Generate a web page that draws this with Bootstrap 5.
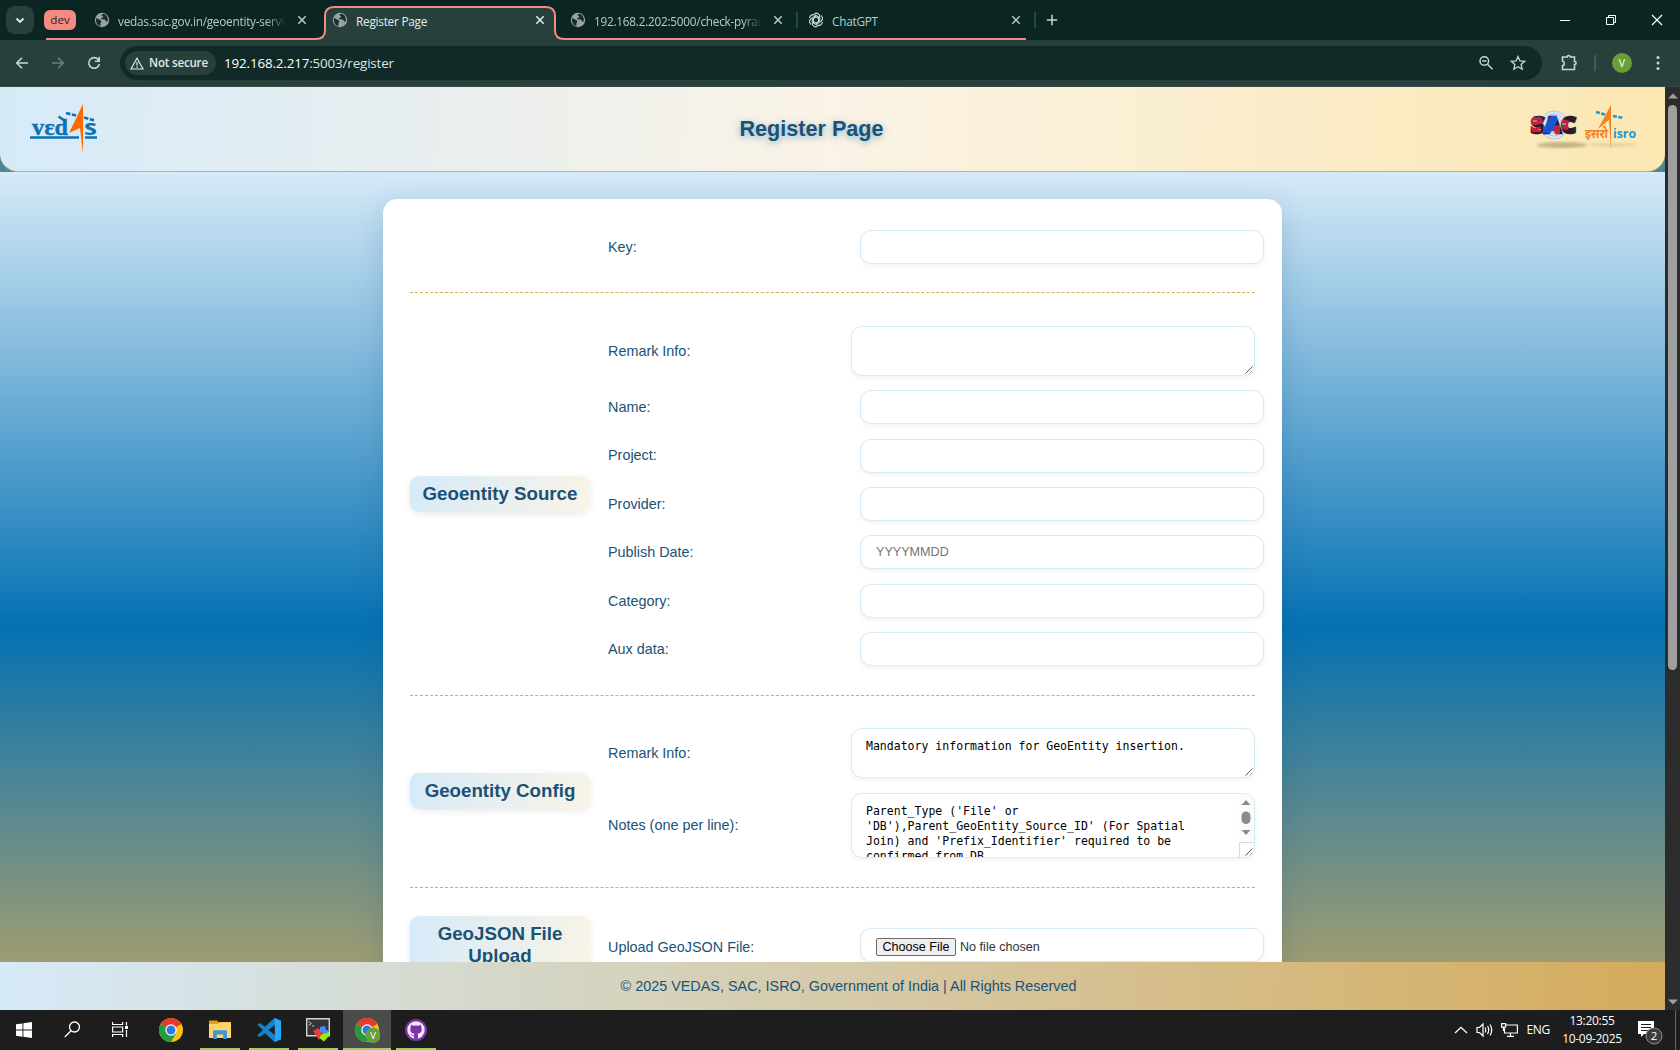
<!DOCTYPE html>
<html lang="en">
<head>
<meta charset="utf-8">
<title>Register Page</title>
<link href="https://cdn.jsdelivr.net/npm/bootstrap@5.3.0/dist/css/bootstrap.min.css" rel="stylesheet">
<style>
  html, body { width: 1680px; height: 1050px; overflow: hidden; }
  body { font-family: "Liberation Sans", Arial, sans-serif; font-size: 14.4px; line-height: 1.15; background: #1d1d1d; }
  svg { display: block; flex: none; }
  .ui-font { font-family: "Open Sans", "Noto Sans", sans-serif; }

  /* browser chrome */
  .tabstrip { height: 40px; background: #0b2622; color: #b5cdc6; font-size: 11.8px; letter-spacing: -.25px; }
  .tab-outline { position: absolute; left: 0; top: 0; }
  .tab-menu { width: 28px; height: 28px; margin-left: 6px; background: #28403b; border-radius: 9px; }
  .group-chip { width: 32px; height: 20px; margin-left: 10px; background: #f38b80; color: #33211f; border-radius: 6px; font-size: 11.6px; letter-spacing: 0; line-height: 18px; padding-bottom: 1px; }
  .tab-list { margin-left: 14px; }
  .browser-tab { width: 238px; padding-left: 4px; }
  .tab-title { width: 168px; margin: 0 8px; padding-top: 1px; line-height: 20px; white-space: nowrap; overflow: hidden; }
  .fade-end { -webkit-mask-image: linear-gradient(90deg, #000 88%, transparent 100%); mask-image: linear-gradient(90deg, #000 88%, transparent 100%); }
  .browser-tab.current { color: #e4eeea; }
  .win-controls { color: #fff; gap: 30px; padding-right: 15px; }
  .toolbar { height: 47px; background: #28403b; border-bottom: 1px solid #3b4946; color: #c3d8d1; padding: 0 14px; }
  .nav-icons { gap: 20px; width: 106px; }
  .omnibox { width: 1422px; height: 34px; background: #112a27; border-radius: 17px; padding: 0 16px 0 5px; }
  .secure-chip { width: 91px; height: 24px; border-radius: 12px; background: #28403b; color: #e0ebe7; font-size: 11.6px; font-weight: 600; letter-spacing: -.2px; padding-left: 5px; gap: 5px; white-space: nowrap; line-height: 20px; }
  .url { color: #dbe6e2; font-size: 13.4px; margin-left: 8px; letter-spacing: -.15px; line-height: 20px; padding-bottom: 1px; }
  .url b { color: #fff; font-weight: 400; }
  .avatar { width: 20px; height: 20px; background: #689f38; color: #fff; font-size: 10.5px; margin-left: 16px; }

  /* page */
  .viewport { width: 1665px; height: 923px; background: #4b8697; }
  .page-header { height: 85px; border-bottom: 1px solid #d2ad68; border-radius: 0 0 18px 18px; background: linear-gradient(92deg, #d6eaf8 0%, #faf3e6 50%, #fbe7b2 100%); padding: 0 27px 0 30px; }
  .page-header h1 { font-size: 21.6px; font-weight: 700; color: #1a5276; text-shadow: 0 2px 7px rgba(0,116,183,.5); margin: 0 4px 0 0; }
  .page-main { height: 790px; overflow: hidden; padding: 27px 383px 0; background: linear-gradient(180deg, #d6eaf8 0, #0471b3 455px, #d5ab5c 908px); }
  .form-panel { height: 900px; width: 899px; background: #fff; border-radius: 14.4px; padding: 0 27px; box-shadow: 0 7px 29px rgba(26,82,118,.2); }
  .form-section { border-bottom: 1px dashed #d9ab5d; }
  .section-label { width: 180px; border-radius: 9px; background: linear-gradient(100deg, #d6eaf8, #f9f4e6); color: #1a5276; font-size: 18.72px; font-weight: 700; line-height: 22px; text-align: center; padding: 7px 9px; box-shadow: 0 2px 7px rgba(0,0,0,.09); margin: 0; }
  .field-group { width: 647px; margin-left: 18px; display: flex; flex-direction: column; gap: 14.4px; }
  .field-group label { flex: none; width: 243px; color: #1a5276; }
  .field-box.form-control { width: 404px; height: 34px; flex: none; margin-left: 9px; border: 1px solid #d6eaf8; border-radius: 11px; background: #fff; padding: 0 15px; font-size: 12.6px; color: #333; box-shadow: 0 2px 5px rgba(0,0,0,.055); }
  .field-box::placeholder { color: #757575; }
  .area-box { position: relative; flex: none; width: 404px; border: 1px solid #d6eaf8; border-radius: 11px; background: #fff; box-shadow: 0 2px 5px rgba(0,0,0,.055); overflow: hidden; font-family: "DejaVu Sans Mono", monospace; font-size: 11.52px; line-height: 15px; color: #000; padding: 10px 14px; white-space: pre; }
  .resize-grip { position: absolute; right: 1px; bottom: 1px; }
  .notes-scroll { position: absolute; right: 0; top: 0; width: 15px; height: 63px; background: #fbfbfb; }
  .file-btn { border: 1px solid #6b6b6b; border-radius: 2px; background: #efefef; color: #000; width: 80px; height: 18px; line-height: 16px; text-align: center; }
  .page-footer { height: 48px; background: linear-gradient(91deg, #d6eaf8, #d5ab5c); color: #1a5276; padding-left: 32px; }
  .page-scroll { width: 15px; background: #2c2c2c; padding: 6px 0 5px; }
  .scroll-thumb { width: 9px; height: 565px; border-radius: 5px; background: #9f9f9f; margin-top: 6px; }

  /* taskbar */
  .taskbar { height: 40px; background: #1d1d1d; color: #fff; }
  .task-cell { width: 48px; height: 40px; border-bottom: 2px solid transparent; padding-top: 1px; position: relative; }
  .task-apps { gap: 1px; margin-left: 3px; }
  .task-open::after { content: ""; position: absolute; left: 4px; right: 4px; bottom: -2px; height: 2px; background: #a0cf62; }
  .task-active { background: #4b4b4b; }
  .task-active::after { left: 0; right: 0; }
  .tray { font-size: 12px; letter-spacing: -.3px; }
  .tray-icon { margin-left: 8px; }
  .clock { line-height: 18px; width: 64px; margin-left: 10px; white-space: nowrap; }
  .show-desktop { width: 5px; height: 40px; border-left: 1px solid #666; margin-left: 12px; }
</style>
<script src="https://cdn.jsdelivr.net/npm/bootstrap@5.3.0/dist/js/bootstrap.bundle.min.js"></script>
</head>
<body>
<svg width="0" height="0" class="position-absolute">
  <defs>
    <symbol id="globe" viewBox="0 0 16 16"><circle cx="8" cy="8" r="7.2" fill="#9aa0a6"/><path d="M2 6.2c2 .2 2.600 1.300 4 1.800 1.500.5 1.500 1.500.8 2.500s-.3 2-.3 3.500C3.500 13.500 1.500 10.500 2 6.200zM9 1.800C7 3 7.500 4 8.800 4.200c1 .2 0 1.600-1.200 1.900-1 .3-.5 1.400.6 1.300 1.800-.2 3.300.5 3.600 1.600.2 1 1 .8 1.900.2C14.600 5.500 12 2.300 9 1.800z" fill="#14302c"/></symbol>
    <symbol id="cross" viewBox="0 0 16 16"><path d="M4.300 4.300l7.400 7.400M11.700 4.300l-7.400 7.400" stroke="currentColor" stroke-width="1.500" fill="none"/></symbol>
    <symbol id="grip" viewBox="0 0 8 8"><path d="M.5 7.500l7-7M4.500 7.500l3-3" stroke="#444" stroke-width=".9" fill="none"/></symbol>
    <symbol id="chrome" viewBox="0 0 24 24"><circle cx="12" cy="12" r="12" fill="#fbc116"/><path d="M12 12L1.600 6A12 12 0 0 1 22.400 6H12z" fill="#e33b2e"/><path d="M12 12L1.600 6A12 12 0 0 0 12 24l5.200-9z" fill="#249a41"/><path d="M12 6h10.400L12 12z" fill="#e33b2e"/><circle cx="12" cy="12" r="5.700" fill="#fff"/><circle cx="12" cy="12" r="4.500" fill="#2a78e4"/></symbol>
  </defs>
</svg>

<div class="d-flex flex-column">
  <div class="tabstrip ui-font d-flex align-items-center position-relative">
    <svg class="tab-outline" width="1680" height="41"><path d="M316 40c6 0 9-3 9-9V16c0-6 3-9 9-9h212c6 0 9 3 9 9v15c0 6 3 9 9 9z" fill="#28403b"/><path d="M46 39h270c6 0 9-3 9-9V16c0-6 3-9 9-9h212c6 0 9 3 9 9v14c0 6 3 9 9 9h462" fill="none" stroke="#f38b80" stroke-width="2"/></svg>
    <div class="tab-menu d-flex align-items-center justify-content-center position-relative"><svg width="10" height="7" viewBox="0 0 10 7"><path d="M1.500 1.500L5 5l3.500-3.500" fill="none" stroke="#e4eeea" stroke-width="1.800"/></svg></div>
    <div class="group-chip d-flex align-items-center justify-content-center position-relative">dev</div>
    <div class="tab-list d-flex position-relative">
      <div class="browser-tab d-flex align-items-center"><svg width="16" height="16"><use href="#globe"/></svg><span class="tab-title fade-end">vedas.sac.gov.in/geoentity-services</span><svg width="16" height="16"><use href="#cross"/></svg></div>
      <div class="browser-tab current d-flex align-items-center"><svg width="16" height="16"><use href="#globe"/></svg><span class="tab-title">Register Page</span><svg width="16" height="16"><use href="#cross"/></svg></div>
      <div class="browser-tab d-flex align-items-center"><svg width="16" height="16"><use href="#globe"/></svg><span class="tab-title fade-end">192.168.2.202:5000/check-pyramid</span><svg width="16" height="16"><use href="#cross"/></svg><svg width="4" height="16" class="ms-2"><path d="M3 0v16" stroke="#2c4a44" stroke-width="1.800"/></svg></div>
      <div class="browser-tab d-flex align-items-center"><svg width="16" height="16" viewBox="-8 -8 16 16" fill="none" stroke="#d3dfdb" stroke-width="1.100"><path id="kn" d="M-1.500-6.600C1-7.500 3.700-6 3.800-3.300V.8L.2 2.900"/><use href="#kn" transform="rotate(60)"/><use href="#kn" transform="rotate(120)"/><use href="#kn" transform="rotate(180)"/><use href="#kn" transform="rotate(240)"/><use href="#kn" transform="rotate(300)"/></svg><span class="tab-title">ChatGPT</span><svg width="16" height="16"><use href="#cross"/></svg><svg width="4" height="16" class="ms-2"><path d="M3 0v16" stroke="#2c4a44" stroke-width="1.800"/></svg></div>
    </div>
    <svg width="32" height="16" class="me-auto position-relative" viewBox="0 0 32 16"><path d="M10 2.800v10.400M4.800 8h10.400" stroke="#c3d8d1" stroke-width="1.500"/></svg>
    <div class="win-controls d-flex align-items-center position-relative">
      <svg width="16" height="16"><path d="M3 8h10" stroke="currentColor" shape-rendering="crispEdges"/></svg>
      <svg width="16" height="16"><path d="M3.500 5.500h7v7h-7zM5.500 5V3.500h7v7H11" stroke="currentColor" fill="none"/></svg>
      <svg width="16" height="16"><path d="M3 3l10 10M13 3L3 13" stroke="currentColor" stroke-width="1.200"/></svg>
    </div>
  </div>

  <div class="toolbar ui-font d-flex align-items-center">
    <div class="nav-icons d-flex align-items-center">
      <svg width="16" height="16" fill="none" stroke="#c3d8d1" stroke-width="1.600"><path d="M14 8H3M8 2.700L2.700 8 8 13.300"/></svg>
      <svg width="16" height="16" fill="none" stroke="#68807a" stroke-width="1.600"><path d="M2 8h11M8 2.700L13.300 8 8 13.300"/></svg>
      <svg width="16" height="16" fill="none" stroke="#c3d8d1" stroke-width="1.600"><path d="M12.500 5A5.300 5.300 0 1 0 13.300 9M13.200 1.800v4.400H8.800"/></svg>
    </div>
    <div class="omnibox d-flex align-items-center">
      <div class="secure-chip d-flex align-items-center"><svg width="14" height="13" viewBox="0 0 14 13" fill="none" stroke="#e0ebe7" stroke-width="1.200"><path d="M7 1.300L13 12H1zM7 5v3.500M7 9.300v1.400"/></svg><span>Not secure</span></div>
      <span class="url me-auto"><b>192.168.2.217</b>:5003/register</span>
      <svg width="16" height="16" fill="none" stroke="#c3d8d1" stroke-width="1.500"><circle cx="6.300" cy="6" r="4.300"/><path d="M9.500 9.200l5 5M4.200 6h4.200"/></svg>
      <svg width="16" height="16" class="ms-3" fill="none" stroke="#c3d8d1" stroke-width="1.300"><path d="M8 1.500l1.900 4.400 4.800.4-3.600 3.200 1.100 4.700L8 11.700l-4.200 2.500 1.100-4.700L1.300 6.300l4.800-.4z"/></svg>
    </div>
    <svg width="18" height="18" class="me-3" viewBox="0 0 18 18" style="margin-left:18px" fill="none" stroke="#c3d8d1" stroke-width="1.600"><path d="M2.500 3h4.700c0-2 3-2 3 0h4.300v4.500c2.200 0 2.200 3 0 3V15.500h-12v-3.800c2.400-.5 2.400-4 0-4.500z"/></svg>
    <svg width="2" height="16"><path d="M1 0v16" stroke="#4a625c" stroke-width="1.600"/></svg>
    <div class="avatar rounded-circle d-flex align-items-center justify-content-center">V</div>
    <svg width="4" height="16" class="ms-auto" style="margin-right:6px" fill="#c3d8d1"><circle cx="2" cy="2.500" r="1.500"/><circle cx="2" cy="8" r="1.500"/><circle cx="2" cy="13.500" r="1.500"/></svg>
  </div>

  <div class="d-flex">
    <div class="viewport">
      <header class="page-header d-flex align-items-center justify-content-between">
        <svg width="67" height="50" viewBox="0 0 67 50">
          <text x="2" y="30.500" font-family="Liberation Serif" font-weight="700" font-size="23" fill="#0e73b5" stroke="#0e73b5" stroke-width=".4" textLength="36" lengthAdjust="spacingAndGlyphs">vɛd</text>
          <text x="54" y="31" font-family="Open Sans" font-weight="700" font-size="22" fill="#0e73b5" textLength="13" lengthAdjust="spacingAndGlyphs">s</text>
          <path d="M0 33.500h49M55 33.500h12" stroke="#0e73b5" stroke-width="2.400"/>
          <path d="M36 9l10 2.500M54 13.500l11 3" stroke="#0e73b5" stroke-width="2.700" stroke-dasharray="4.500 1.500"/>
          <path d="M28.500 12.500l6 4" fill="none" stroke="#0e73b5" stroke-width="2.700"/>
          <path d="M53 0v50L50 24 39 29z" fill="#ff6a00"/>
        </svg>
        <h1>Register Page</h1>
        <svg width="108" height="50" viewBox="0 0 108 50">
          <defs>
            <pattern id="sac" width="47" height="22" x="0" y="11" patternUnits="userSpaceOnUse"><path d="M0 0h47v22H0z" fill="#2b1c2b"/><path d="M0 2h11l3 5-6 3H0zM1 12h10v5H2zM20 11l10-1v9h-12zM32 4l8 2-2 9-7-1z" fill="#c4203c"/><path d="M13 9l8-8h8l-7 17h-9z" fill="#1a55cf"/><path d="M3 5h4v2H3zM32 8h4v2h-4zM8 14h3v1H8z" fill="#5aa0bd"/></pattern>
            <filter id="soft"><feGaussianBlur stdDeviation="1.800"/></filter></defs>
          <ellipse cx="32" cy="41" rx="25" ry="3" fill="#8b7a4c" opacity=".5" filter="url(#soft)"/><ellipse cx="82" cy="41" rx="24" ry="2" fill="#8b7a4c" opacity=".2" filter="url(#soft)"/>
          <g fill="none" stroke="#b8c1df"><circle cx="24" cy="21" r="14" fill="#e4e7ef"/><circle cx="24" cy="21" r="11"/><circle cx="24" cy="21" r="8"/></g>
          <text x="1" y="29" font-family="Open Sans" font-weight="800" font-size="23" fill="url(#sac)" stroke="url(#sac)" stroke-width="2.600" textLength="45" lengthAdjust="spacingAndGlyphs">SAC</text>
          <path d="M81 1v45L79 16l-11 9z" fill="#f58220"/>
          <path d="M66 8l9 2.500M83 12l10 2" stroke="#159bd7" stroke-width="2.600" stroke-dasharray="4 1.400"/>
          <text x="55" y="34" font-family="Noto Sans Devanagari, Noto Sans, FreeSans, sans-serif" font-weight="700" font-size="12" fill="#f58220" textLength="23" lengthAdjust="spacingAndGlyphs">इसरो</text>
          <text x="83" y="34" font-family="Open Sans" font-weight="700" font-size="12" fill="#159bd7" textLength="23" lengthAdjust="spacingAndGlyphs">isro</text>
        </svg>
      </header>
      <main class="page-main">
        <form class="form-panel">
          <section class="form-section d-flex align-items-center" style="height:94px">
            <div class="field-group" style="margin-left:198px;padding-top:3px"><div class="d-flex align-items-center"><label>Key:</label><input class="form-control field-box"></div></div>
          </section>
          <section class="form-section d-flex align-items-center" style="height:403px">
            <h2 class="section-label">Geoentity Source</h2>
            <div class="field-group pt-1">
              <div class="d-flex align-items-center"><label>Remark Info:</label><div class="area-box" style="height:50px"><svg class="resize-grip" width="8" height="8"><use href="#grip"/></svg></div></div>
              <div class="d-flex align-items-center"><label>Name:</label><input class="form-control field-box"></div>
              <div class="d-flex align-items-center"><label>Project:</label><input class="form-control field-box"></div>
              <div class="d-flex align-items-center"><label>Provider:</label><input class="form-control field-box"></div>
              <div class="d-flex align-items-center"><label>Publish Date:</label><input class="form-control field-box" placeholder="YYYYMMDD"></div>
              <div class="d-flex align-items-center"><label>Category:</label><input class="form-control field-box"></div>
              <div class="d-flex align-items-center"><label>Aux data:</label><input class="form-control field-box"></div>
            </div>
          </section>
          <section class="form-section d-flex align-items-center" style="height:192px;padding-bottom:1px">
            <h2 class="section-label">Geoentity Config</h2>
            <div class="field-group" style="padding-top:4px;gap:15px">
              <div class="d-flex align-items-center"><label>Remark Info:</label><div class="area-box" style="height:50px">Mandatory information for GeoEntity insertion.<svg class="resize-grip" width="8" height="8"><use href="#grip"/></svg></div></div>
              <div class="d-flex align-items-center"><label>Notes (one per line):</label><div class="area-box" style="height:65px">Parent_Type ('File' or
'DB'),Parent_GeoEntity_Source_ID' (For Spatial
Join) and 'Prefix_Identifier' required to be
confirmed from DB<svg class="notes-scroll" width="15" height="63"><path d="M2.500 11L7 6l4.500 5zM2.500 36l4.500 5 4.500-5z" fill="#8b8b8b"/><rect x="2.500" y="17.500" width="9" height="12.500" rx="4.500" fill="#8b8b8b"/><path d="M.5 63V48.500H15" fill="#fff" stroke="#d9d9d9"/></svg><svg class="resize-grip" width="8" height="8"><use href="#grip"/></svg></div></div>
            </div>
          </section>
          <section class="d-flex align-items-center" style="height:114px">
            <h2 class="section-label">GeoJSON File Upload</h2>
            <div class="field-group"><div class="d-flex align-items-center"><label class="pt-1">Upload GeoJSON File:</label><div class="form-control field-box d-flex align-items-center pt-1"><span class="file-btn">Choose File</span><span class="ms-1">No file chosen</span></div></div></div>
          </section>
        </form>
      </main>
      <footer class="page-footer d-flex align-items-center justify-content-center">© 2025 VEDAS, SAC, ISRO, Government of India | All Rights Reserved</footer>
    </div>
    <div class="page-scroll d-flex flex-column align-items-center">
      <svg width="10" height="6"><path d="M0 5.500L5 .5l5 5z" fill="#9f9f9f"/></svg>
      <div class="scroll-thumb"></div>
      <svg width="10" height="6" class="mt-auto"><path d="M0 .5l5 5 5-5z" fill="#9f9f9f"/></svg>
    </div>
  </div>

  <div class="taskbar ui-font d-flex align-items-center">
    <div class="task-cell d-flex align-items-center justify-content-center"><svg width="16" height="16" fill="#fff"><path d="M0 2.300L6.500 1.400v6.200H0zM7.400 1.300L16 0v7.600H7.400zM0 8.500h6.500v6.200L0 13.800zM7.400 8.500H16V16l-8.600-1.200z"/></svg></div>
    <div class="task-cell d-flex align-items-center justify-content-center"><svg width="17" height="17" fill="none" stroke="#fff" stroke-width="1.300"><circle cx="10.500" cy="6" r="5"/><path d="M7 9.700L.8 16"/></svg></div>
    <div class="task-cell d-flex align-items-center justify-content-center"><svg width="17" height="17" fill="none" stroke="#fff" stroke-width="1.200"><path d="M.6 1v2.500h10V1M.6 6h10v5H.6zM.6 16v-2.500h10V16M14.500 1v3.500M14.500 9v7"/><path d="M13 5h3v3h-3z" fill="#fff" stroke="none"/></svg></div>
    <div class="task-apps d-flex">
      <div class="task-cell d-flex align-items-center justify-content-center"><svg width="24" height="24"><use href="#chrome"/></svg></div>
      <div class="task-cell task-open d-flex align-items-center justify-content-center"><svg width="22" height="20" viewBox="0 0 22 20"><path d="M0 1.500Q0 .5 1 .5h7l1.500 1.800H22V18H0z" fill="#e3a008"/><path d="M0 4h8.500l2-1.700H21q1 0 1 1V18H0z" fill="#ffd56b"/><path d="M4 19v-7.500q0-1.200 1.200-1.200h11.600q1.200 0 1.200 1.200V19h-3.800v-4.500H7.800V19z" fill="#3b97dc"/></svg></div>
      <div class="task-cell task-open d-flex align-items-center justify-content-center"><svg width="24" height="24" viewBox="0 0 24 24"><path d="M17.500 0L24 2.800v18.400L17.500 24 8 15.200 2.600 19 .3 17.600 6 12 .3 6.400 2.600 5 8 8.800z" fill="#1484cc"/><path d="M18 7v10l-6.500-5z" fill="#1d1d1d"/><path d="M17.500 0L24 2.800v18.400L17.500 24l.5-2z" fill="#2aa7f2"/></svg></div>
      <div class="task-cell task-open d-flex align-items-center justify-content-center"><svg width="24" height="24" viewBox="0 0 24 24"><path d="M.7.700h22.600v17H.7z" fill="#323436" stroke="#d3d3d3" stroke-width="1.400"/><path d="M3 3.500l2 2-2 2M6.500 8h1.500" stroke="#fff" fill="none"/><path d="M7 13l5-3 3 3 2 4-4 5z" fill="#e83e3e"/><path d="M14 9l5-1 1 4 4 1-5 4-5-4z" fill="#4d8df0"/><path d="M14 18l4-3 1 1 4-2v4l-5 5.500-4-3z" fill="#9ee615"/></svg></div>
      <div class="task-cell task-open task-active d-flex align-items-center justify-content-center"><svg width="26" height="26" viewBox="0 0 26 26"><use href="#chrome" width="24" height="24" x="1" y="1"/><circle cx="19" cy="18.300" r="7.700" fill="#689f38"/><text x="19" y="22" font-size="9.500" text-anchor="middle" fill="#fff">V</text></svg></div>
      <div class="task-cell task-open d-flex align-items-center justify-content-center"><svg width="22" height="22" viewBox="0 0 22 22"><circle cx="11" cy="11" r="11" fill="#8030ad"/><circle cx="11" cy="11" r="8.700" fill="#f2edf7"/><path d="M9 19.800v-3c-2.700.5-3-1.200-4-1.700 1.500-.2 2 1.600 4 .9.100-.6.300-.9.600-1.200-3.800-.5-5-2.800-4-6.200.4-1 .1-2 .4-2.800 1.200.1 2 .7 2.700 1.100 1.500-.4 3.100-.4 4.600 0 .7-.4 1.500-1 2.700-1.100.3.800 0 1.800.4 2.800 1 3.400-.2 5.700-4 6.200.5.500.6 1 .6 1.700v3.300z" fill="#8030ad"/></svg></div>
    </div>
    <div class="tray d-flex align-items-center ms-auto">
      <svg width="14" height="8" fill="none" stroke="#fff" stroke-width="1.300"><path d="M1 7l6-5.700L13 7"/></svg>
      <svg width="17" height="16" class="tray-icon" fill="none" stroke="#fff" stroke-width="1.200"><path d="M1 5.500h2.500L7 2v12l-3.500-3.500H1zM9 5.500q1.500 2.500 0 5M11.500 4q2.500 4 0 8M14 2.500q3.500 5.500 0 11"/></svg>
      <svg width="17" height="16" class="tray-icon" fill="none" stroke="#fff" stroke-width="1.200"><path d="M5 3h11.400v8H3.500V6M9.500 11v3M6 14.300h7M.6 1.600h4v3.500h-4zM2.500 5v4"/></svg>
      <span class="ms-2">ENG</span>
      <div class="clock text-center">13:20:55<br>10-09-2025</div>
      <svg width="26" height="30" viewBox="0 0 26 30" style="margin-left:13px"><path d="M1 6h16v13H7l-3 3v-3H1z" fill="#fff"/><path d="M4 9.500h10M4 12.500h10M4 15.500h7" stroke="#1d1d1d"/><circle cx="17" cy="21" r="8" fill="#3b3b3b" stroke="#8a8a8a"/><text x="17" y="25" text-anchor="middle" font-size="11.500" fill="#fff">2</text></svg>
      <div class="show-desktop"></div>
    </div>
  </div>
</div>
</body>
</html>
